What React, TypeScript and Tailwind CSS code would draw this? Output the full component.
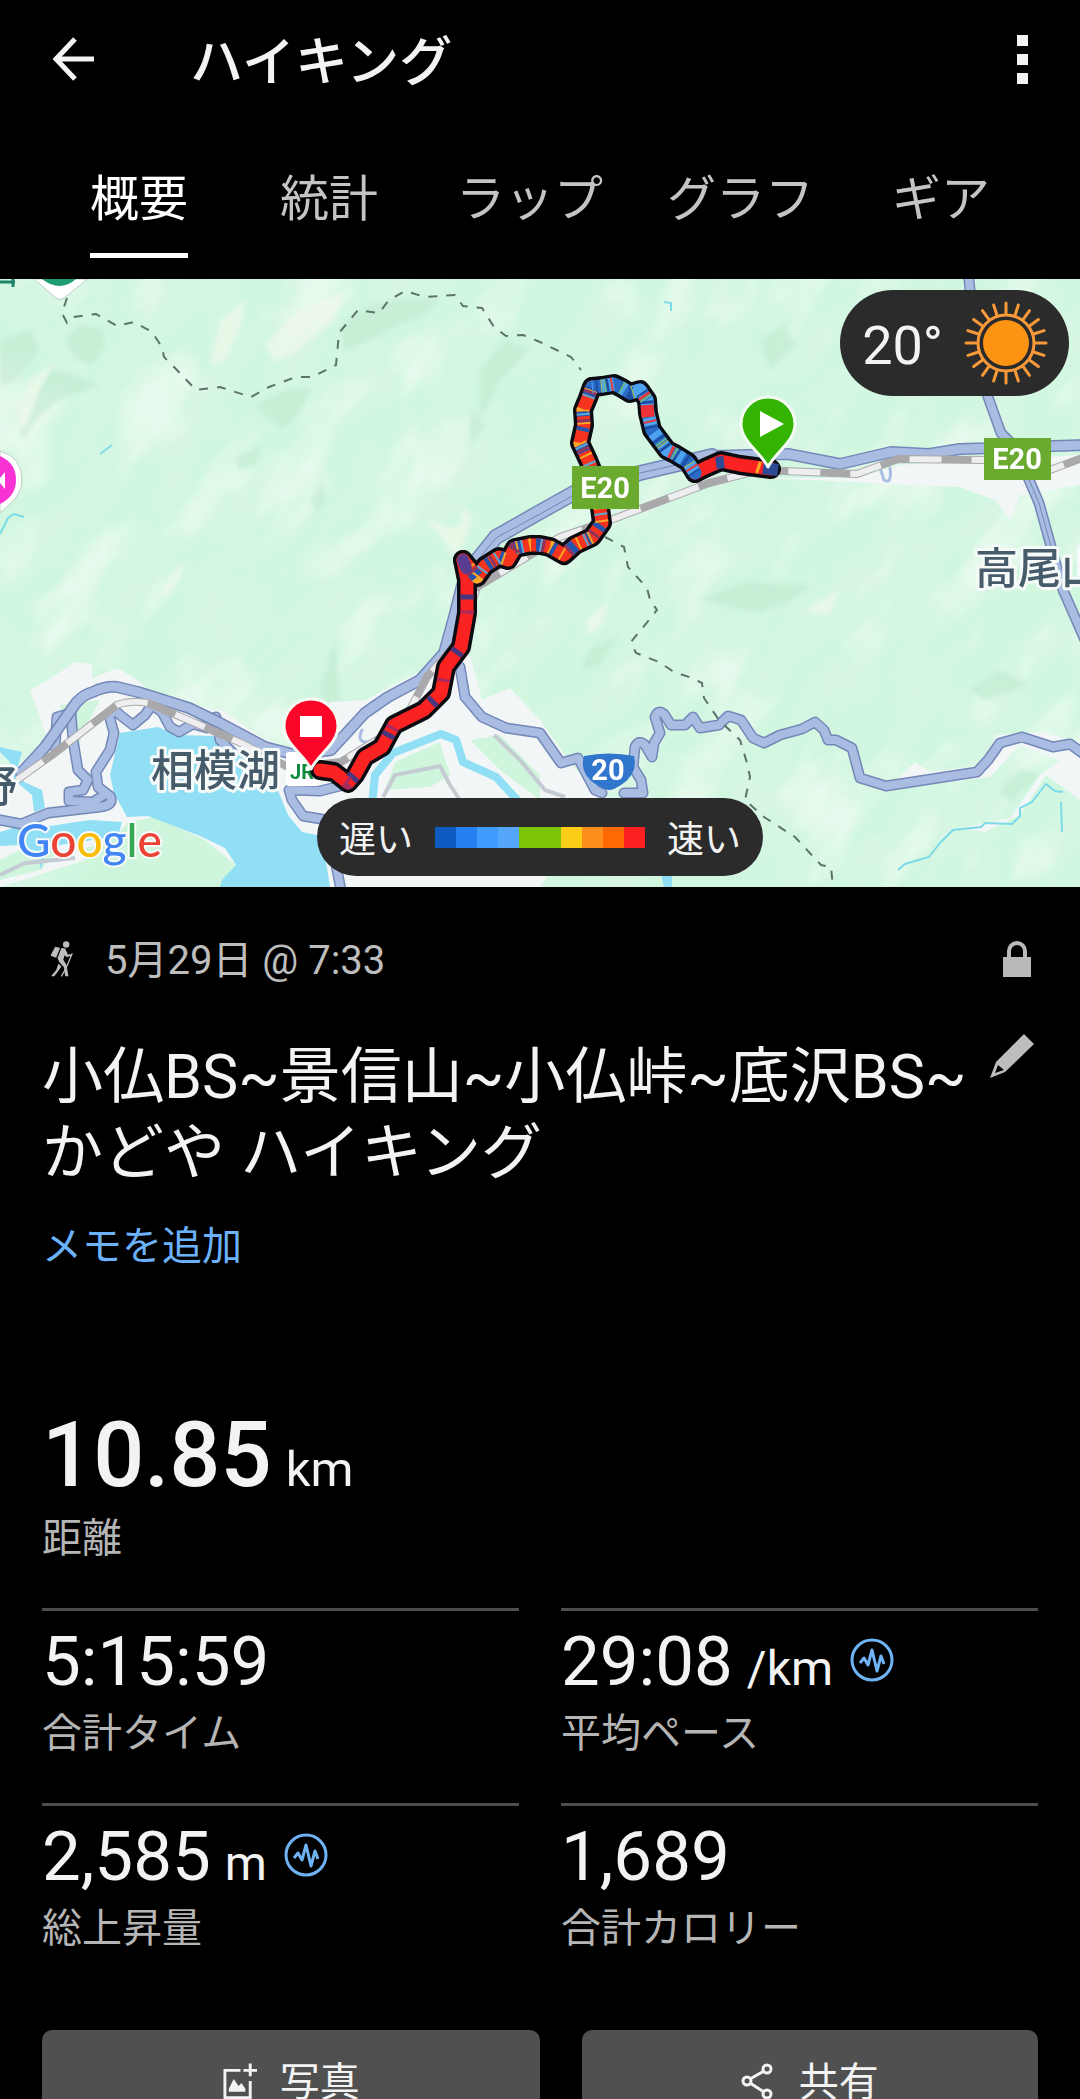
import type { ReactNode } from "react";

const FONT = "font-['Roboto','Noto_Sans_CJK_JP',sans-serif]";

const EXPRESSWAY =
  "M21 773L45 747L76 703Q84 694 93 692Q105 686 117 687L138 692L189 708L220 723L265 747L296 755L331 750L365 713L388 697L420 680L444 653L455 613L462 585L472 563L496 537L540 512L574 493L640 473L712 456L788 454L840 464L891 452L929 454L960 449L1085 445";
const ROADS = [
  "M-5 819L21 824L48 813L100 807Q115 805 110 796L98 787L96 772L110 750L114 733L109 715Q115 709 120 715L133 725L145 715L152 705L162 712L170 727L179 732L193 724L207 728L216 717L220 740L232 752",
  "M55 747L57 717L71 713L73 740L78 770L88 780L83 790L69 792L69 801L93 802L104 795",
  "M344 785L320 791L289 790L292 800L303 816L327 820L341 890",
  "M460 667L465 697L482 717L506 728L540 733L561 763L578 758L586 773L595 790L602 793",
  "M624 793L643 793L641 780L633 767L635 747Q639 739 645 745L652 757L654 743L660 733L655 717Q658 709 664 714L671 725L685 725L693 717L700 728L719 725L728 716L741 720L753 738L764 743L780 735L802 729L815 722L824 730L828 740L836 740L852 748L860 778L886 786L977 772L988 760L1000 743L1022 737L1053 747L1070 744L1085 755",
  "M968 270L970 290L988 397L1001 433L1015 447L1039 503L1052 550L1063 590L1085 640",
];
const RAIL =
  "M17 780L52 755L117 705Q130 700 148 703L200 725L241 743L290 768L341 762L385 735L406 717L427 677L460 640L477 587L560 537L616 518L709 483L760 470L857 474L898 459L984 460L1050 470L1085 457";
const BOUNDARY = [
  "M67 298L62 313L67 323L74 317L96 314L117 326L134 322L152 332L162 347L164 357L174 367L196 390L220 387L251 397L269 387L296 377L312 377L336 365L339 333L358 310L379 313L389 300L405 291L425 297L455 295L463 306L482 308L494 327L506 336L523 335L540 342L571 357L581 370",
  "M605 537L624 547L628 567L647 588L650 600L657 610L631 642L636 653L659 662L674 672L692 678L702 683L704 698L719 720L740 740L747 763L750 777L745 800L764 817L795 837L821 865L831 867L833 887",
];
const TRACK_LOW =
  "M320 770L334 772L348 783L355 775L365 757L382 747L394 725L424 710L441 693L446 667L461 647L467 613L467 580L463 560";
const TRACK_MID =
  "M463 560L477 577L485 566L499 557L508 560L515 548L530 545L540 545L550 547L564 555L575 545L592 537L602 523L600 508L595 477L588 460L580 443L584 425L583 410L588 398L592 387";
const TRACK_UP =
  "M592 387L602 386L614 384L622 388L630 393L640 390L647 400L648 413L652 430L667 450L675 454L688 462L695 473";
const TRACK_END = "M695 473L705 468L721 461L740 465L771 469";

const TERRAIN_DARK = [
  "M65 340L80 325L102 328L105 345L92 365L75 358Z",
  "M340 325L370 305L405 298L440 300L420 318L395 326L370 340L345 350Z",
  "M20 430L50 370L75 375L100 385L62 398L40 415L22 440Z",
  "M255 405L285 390L312 388L300 410L283 430L270 420Z",
  "M480 370L505 340L530 350L500 380L480 420Z",
  "M700 600L745 582L810 585L785 605L755 612Z",
  "M0 340L30 330L40 350L15 380L0 385Z",
  "M760 340L785 325L795 345L770 370Z",
  "M470 410L485 425L470 445Z",
  "M310 500L322 480L326 500L318 512Z",
  "M590 650L618 635L600 665L580 670Z",
  "M970 690L1000 670L1030 685L985 700Z",
  "M1000 790L1020 770L1040 775L1010 802Z",
  "M235 458L262 445L255 465L240 470Z",
  "M320 690L335 640L340 700L330 710Z",
];
const TERRAIN_LIGHT = [
  "M210 365L220 320L245 300L240 330L225 360Z",
  "M265 345L300 310L345 292L335 320L300 350L275 362Z",
  "M15 410L30 380L55 362L40 390L25 430Z",
  "M425 518L450 528L460 525L463 505L472 518L465 540L455 558L440 535Z",
  "M160 590L185 560L180 580L165 600Z",
  "M900 340L930 330L915 370L880 385Z",
  "M585 620L610 600L600 625L588 636Z",
  "M820 600L840 590L830 615L805 612Z",
];

function Tints({ d, shades }: { d: string; shades: [string, string, number][] }) {
  return (
    <>
      {shades.map(([color, dash, offset]) => (
        <path key={color + dash} d={d} stroke={color} strokeWidth={13} strokeDasharray={dash} strokeDashoffset={offset} />
      ))}
    </>
  );
}

function RouteMap() {
  return (
    <svg viewBox="0 279 1080 608" className="block h-auto w-full" role="img" aria-label="ルートマップ">
      <defs>
        <filter id="relief" x="0" y="0" width="100%" height="100%">
          <feTurbulence type="fractalNoise" baseFrequency="0.011 0.021" numOctaves={3} seed={11} />
          <feColorMatrix values="0 0 0 0 0.73  0 0 0 0 0.91  0 0 0 0 0.8  3.4 0 0 0 -1.6" />
        </filter>
        <filter id="glow" x="0" y="0" width="100%" height="100%">
          <feTurbulence type="fractalNoise" baseFrequency="0.01 0.02" numOctaves={3} seed={4} />
          <feColorMatrix values="0 0 0 0 0.95  0 0 0 0 0.98  0 0 0 0 0.93  4 0 0 0 -2.1" />
        </filter>
        <filter id="soft">
          <feGaussianBlur stdDeviation={2} />
        </filter>
      </defs>
      <rect y={279} width={1080} height={608} fill="#d2f7e1" />
      <g transform="rotate(-52 540 583)">
        <rect x={-260} y={-260} width={1600} height={1700} filter="url(#relief)" opacity={0.4} />
        <rect x={-260} y={-260} width={1600} height={1700} filter="url(#glow)" opacity={0.5} />
      </g>
      <g filter="url(#soft)">
        {TERRAIN_DARK.map((d) => (
          <path key={d} d={d} fill="#bfe9cf" opacity={0.6} />
        ))}
        {TERRAIN_LIGHT.map((d) => (
          <path key={d} d={d} fill="#f1f8ea" opacity={0.7} />
        ))}
      </g>

      {/* built-up areas */}
      <g fill="#f2f6f6">
        <path d="M30 690L48 680L75 662L92 664L92 678L118 668L140 682L150 692L190 703L225 712L262 738L300 752L330 702L365 700L420 672L470 655L482 700L510 688L540 720L570 762L602 800L540 887L230 887L150 840L0 887L0 780L48 740Z" />
        <path d="M900 776L915 762L930 772L985 765L996 735L1040 732L1080 742V800L1046 775L1020 815L985 832L960 828L1010 818L1040 775L1060 760L1020 745L990 777L890 790Z" />
        <path d="M700 478L857 478L900 465L1080 455V485L1020 495L1010 520L995 500L960 487L905 485L857 482L760 478Z" />
      </g>
      <g fill="#cff6dc">
        <path d="M60 705L100 700L82 735L78 752L70 745Z" />
        <path d="M385 790L395 762L440 742L450 775L430 787Z" />
        <path d="M470 740L500 735L540 775L540 800L500 770Z" />
        <path d="M128 822L155 817L205 840L236 865L222 887H60L90 870L80 850L115 838Z" />
        <path d="M0 860L30 845L60 850L40 870L0 880Z" />
      </g>

      {/* water */}
      <g fill="#90dff5">
        <path d="M120 733L158 727L176 735L213 736L222 750L262 762L279 793L288 815L302 832L322 836L330 887H220L222 880L236 865L225 848L200 836L148 816L127 817L114 793L110 775Z" />
        <path d="M0 747L22 752L18 765L24 782L42 790L45 808L34 812L32 795L14 780L10 762L0 752Z" />
        <path d="M0 832L20 826L50 826L90 820L122 822L118 836L60 845L45 855L41 870L38 852L20 845L0 846Z" />
        <path d="M660 870L672 872V887H664Z" />
      </g>
      <path d="M372 805L375 775L393 753L441 734L456 740L463 762L496 777L520 803" fill="none" stroke="#90dff5" strokeWidth={8} strokeLinejoin="round" />
      <g fill="none" stroke="#7bdbe8" strokeWidth={2}>
        <path d="M898 870L905 864L929 857L940 843L953 830L981 827L985 823L1012 824L1020 816L1020 808L1032 802L1046 784L1055 791L1063 792" />
        <path d="M1061 802L1062 832M100 454L112 445M0 534L8 518L14 514L24 517M664 302L671 303L671 311" />
      </g>
      <path d="M383 797L395 775L440 766L450 785L460 800M0 875L25 863L75 858M494 735L520 760L545 790L565 797" fill="none" stroke="#c5cbd2" strokeWidth={4} />

      {/* roads */}
      <g fill="none" strokeLinejoin="round" strokeLinecap="round">
        {ROADS.map((d) => (
          <path key={d} d={d} stroke="#7488b8" strokeWidth={11} />
        ))}
        {ROADS.map((d) => (
          <path key={d} d={d} stroke="#a9bce2" strokeWidth={8} />
        ))}
        <path d={EXPRESSWAY} stroke="#7488b8" strokeWidth={12} />
        <path d={EXPRESSWAY} stroke="#a9bce2" strokeWidth={9} />
        <path d="M476 562L496 537L540 512L574 493L640 473L712 456" stroke="#7488b8" strokeWidth={16} />
        <path d="M476 562L496 537L540 512L574 493L640 473L712 456" stroke="#a9bce2" strokeWidth={13} />
        <path d="M476 562L496 538L540 514L574 495L640 473L690 462M1015 447L1039 503L1052 550" stroke="#7488b8" strokeWidth={1} />
        <path d="M880 468L884 480Q892 485 890 468M362 730Q355 744 372 742" stroke="#a9bce2" strokeWidth={3} />
      </g>
      <g fill="none" strokeLinejoin="round">
        <path d={RAIL} stroke="#a9a8ab" strokeWidth={8} />
        <path d={RAIL} stroke="#eeeef0" strokeWidth={6} strokeDasharray="32 30" />
      </g>
      <g fill="none" stroke="#5d7269" strokeWidth={2} strokeDasharray="9 9">
        {BOUNDARY.map((d) => (
          <path key={d} d={d} />
        ))}
      </g>

      {/* place pins at the edges */}
      <path d="M34 279L56 298Q60 301 64 298L88 279Z" fill="#fff" stroke="#b9cdc4" />
      <path d="M42 279Q60 293 76 279Z" fill="#1d9c71" />
      <path d="M0 282H15M13 279V287" stroke="#1d8468" strokeWidth={3} />
      <path d="M0 451Q22 457 22 480Q22 492 12 502L0 513Z" fill="#fff" stroke="#b9cdc4" />
      <path d="M0 456Q16 463 16 480Q16 496 0 504Z" fill="#f832d3" />
      <path d="M0 478L5 472V489L0 483Z" fill="#fff" />

      {/* place names */}
      <g className="font-['Noto_Sans_CJK_JP',sans-serif]" fontSize={43} fontWeight={500} fill="#475c6b" stroke="#f6faf9" strokeWidth={6} strokeLinejoin="round" paintOrder="stroke">
        <text x={151} y={786}>相模湖</text>
        <text x={975} y={584}>高尾山</text>
        <text x={-26} y={802}>野</text>
      </g>
      <rect x={286} y={752} width={34} height={34} rx={3} fill="#fff" />
      <text x={290} y={779} fontSize={20} fontWeight={700} fill="#0e8a3c" className="font-['Roboto',sans-serif]">JR</text>

      {/* recorded track */}
      <g fill="none" strokeLinejoin="round" strokeLinecap="round">
        {[TRACK_LOW, TRACK_MID, TRACK_UP, TRACK_END].map((d) => (
          <path key={d} d={d} stroke="#0b0b12" strokeWidth={20} />
        ))}
        <path d={TRACK_LOW} stroke="#fb2222" strokeWidth={13} />
        <path d={TRACK_END} stroke="#fb2222" strokeWidth={13} />
        <path d={TRACK_MID} stroke="#f5331f" strokeWidth={13} />
        <path d={TRACK_UP} stroke="#2a6bc8" strokeWidth={13} />
      </g>
      <g fill="none" strokeLinejoin="round">
        <Tints d={TRACK_LOW} shades={[["#47367f", "5 52", 20], ["#a82a5e", "3 71", 45]]} />
        <Tints
          d={TRACK_MID}
          shades={[
            ["#2554ad", "5 17 8 14 4 11", 6],
            ["#f9a825", "2 19 2 11", 12],
            ["#5aa9d8", "2 31 2 17", 3],
            ["#8a3560", "3 27", 17],
          ]}
        />
        <Tints
          d={TRACK_UP}
          shades={[
            ["#4da3f0", "6 9 12 7", 5],
            ["#1d4fa3", "3 12 2 8", 11],
            ["#e23a3f", "3 24 2 36", 8],
            ["#66b88f", "2 28 2 16", 18],
            ["#b7c94a", "1 33", 25],
          ]}
        />
        <path d="M647 405L648 417" stroke="#ee3138" strokeWidth={13} />
        <path d="M716 463L724 462M763 468L778 470" stroke="#2e4a94" strokeWidth={12} />
        <path d="M757 467L760 468" stroke="#f9a825" strokeWidth={12} />
        <path d="M463 560L466 568" stroke="#5a3d8f" strokeWidth={12} strokeLinecap="round" />
      </g>

      {/* road signs */}
      <g className="font-['Roboto',sans-serif]" fontWeight={700} fill="#fff" textAnchor="middle">
        <rect x={572} y={466} width={67} height={43} fill="#69aa2f" />
        <text x={605} y={498} fontSize={29}>E20</text>
        <rect x={984} y={438} width={67} height={42} fill="#69aa2f" />
        <text x={1017} y={469} fontSize={29}>E20</text>
        <path d="M584 756Q609 751 634 756Q639 776 616 788Q609 792 602 788Q578 776 584 756Z" fill="#3176cd" />
        <text x={608} y={780} fontSize={29}>20</text>
      </g>

      {/* finish and start markers */}
      <g stroke="#f3fbf3" strokeWidth={3} strokeLinejoin="round">
        <path d="M311 769C304 754 284 744 284 726A27 27 0 0 1 338 726C338 744 318 754 311 769Z" fill="#fb0628" />
        <path d="M768 467C761 452 741 442 741 424A27 27 0 0 1 795 424C795 442 775 452 768 467Z" fill="#33b400" />
      </g>
      <rect x={300} y={716} width={22} height={21} fill="#fff" />
      <path d="M760 411L784 424L760 437Z" fill="#fff" />

      <text x={17} y={857} fontSize={46} fontWeight={500} stroke="#f6faf9" strokeWidth={4} paintOrder="stroke" className="font-['Lato','Roboto',sans-serif]">
        <tspan fill="#4285f4">G</tspan>
        <tspan fill="#ea4335">o</tspan>
        <tspan fill="#fbbc05">o</tspan>
        <tspan fill="#4285f4">g</tspan>
        <tspan fill="#34a853">l</tspan>
        <tspan fill="#ea4335">e</tspan>
      </text>
    </svg>
  );
}

function Sun() {
  return (
    <svg viewBox="-42 -42 84 84" className="size-[84px]" aria-hidden="true">
      <g stroke="#f99a3a" strokeWidth={3} strokeLinecap="round">
        {Array.from({ length: 20 }, (_, i) => (
          <path key={i} d="M0 -29V-40" transform={`rotate(${i * 18})`} />
        ))}
      </g>
      <circle r={28} fill="none" stroke="#f99a3a" strokeWidth={3} />
      <circle r={23} fill="#fd9312" />
    </svg>
  );
}

function Hiker() {
  return (
    <svg viewBox="0 0 72 112" className="h-9 w-6" fill="#bdbdbd" aria-hidden="true">
      <circle cx={49} cy={11} r={10} />
      <path d="M15 18L30 22L18 52L2 47Q0 44 3 40Z" />
      <path d="M34 22L46 23L54 42L66 41L66 47L50 50L44 44L40 58L50 74L56 110L46 110L42 82L28 66L22 54Z" />
      <path d="M25 70L34 79L24 94L12 110L2 110L18 90Z" />
      <path d="M68 38L48 86L34 110" fill="none" stroke="#bdbdbd" strokeWidth={4} />
    </svg>
  );
}

function Pulse() {
  return (
    <svg viewBox="0 0 44 44" className="ml-[17px] mt-4 size-11 self-start" fill="none" stroke="#6fb3f5" strokeWidth={3} aria-hidden="true">
      <circle cx={22} cy={22} r={20} />
      <path d="M10 25L14 20L18 27L22 12L27 33L31 18L34 26" strokeLinejoin="round" />
    </svg>
  );
}

function Stat({ value, unit, label, estimated }: { value: string; unit?: string; label: string; estimated?: boolean }) {
  return (
    <div className="flex flex-col border-t-3 border-[#4d4d4d] pt-[11px] pb-[45px]">
      <dt className="order-2 mt-2 text-[40px] leading-[48px] text-[#b5b5b5]">{label}</dt>
      <dd className="flex h-20 items-baseline text-[69px] leading-[80px]">
        {value}
        {unit && <span className="ml-[14px] text-[48px] leading-none">{unit}</span>}
        {estimated && <Pulse />}
      </dd>
    </div>
  );
}

function ActionButton({ icon, children, className }: { icon: ReactNode; children: ReactNode; className: string }) {
  return (
    <button type="button" className={`flex h-[106px] items-center justify-center rounded-[10px] bg-[#505050] text-[40px] leading-[48px] ${className}`}>
      {icon}
      {children}
    </button>
  );
}

const TABS = ["概要", "統計", "ラップ", "グラフ", "ギア"];
const LEGEND = ["bg-[#0c5bc2]", "bg-[#2580f2]", "bg-[#419bfd]", "bg-[#55a6fd]", "bg-[#7cc506]", "bg-[#7cc506]", "bg-[#fdcd18]", "bg-[#fe8f1c]", "bg-[#fd6a03]", "bg-[#fd2020]"];

export default function App() {
  return (
    <div lang="ja" className={`flex h-screen flex-col overflow-hidden bg-black text-[#f3f3f3] ${FONT}`}>
      <header className="flex h-[118px] shrink-0 items-center pr-[50px] pl-[50px]">
        <button type="button" aria-label="戻る" className="flex size-12 items-center justify-center">
          <svg viewBox="0 0 48 48" className="size-12" fill="none" stroke="#f3f3f3" strokeWidth={5}>
            <path d="M44 24H7M25 4L6 24L25 44" />
          </svg>
        </button>
        <h1 className="ml-[92px] flex-1 pt-2 text-[53px] leading-[64px] font-medium">ハイキング</h1>
        <button type="button" aria-label="その他" className="flex w-4 flex-col items-center gap-2">
          <span className="size-[11px] bg-[#f3f3f3]" />
          <span className="size-[11px] bg-[#f3f3f3]" />
          <span className="size-[11px] bg-[#f3f3f3]" />
        </button>
      </header>

      <nav role="tablist" className="flex shrink-0 justify-center py-[21px]">
        {TABS.map((tab, i) => (
          <button
            key={tab}
            type="button"
            role="tab"
            aria-selected={i === 0}
            className={`flex h-[119px] min-w-[190px] justify-center px-8 text-[49px] ${i === 0 ? "text-white" : "text-[#c4c4c4]"}`}
          >
            <span className={`flex h-full items-center border-t-8 border-b-5 border-transparent ${i === 0 ? "border-b-white" : ""}`}>{tab}</span>
          </button>
        ))}
      </nav>

      <main className="min-h-0 flex-1 overflow-hidden">
        <section className="relative">
          <RouteMap />
          <div className="absolute top-[11px] right-[11px] flex h-[106px] items-center gap-[21px] rounded-full bg-[#2b2b2b] pr-[21px] pl-[22px]">
            <span className="pt-1 text-[54px]">20°</span>
            <Sun />
          </div>
          <div className="absolute bottom-[11px] left-1/2 flex h-[78px] -translate-x-1/2 items-center gap-[22px] rounded-full bg-[#2b2b2b] px-[22px] text-[37px]">
            <span className="pt-2">遅い</span>
            <span className="flex">
              {LEGEND.map((c, i) => (
                <span key={i} className={`h-[21px] w-[21px] ${c}`} />
              ))}
            </span>
            <span className="pt-2">速い</span>
          </div>
        </section>

        <section className="px-[42px] pt-12">
          <div className="flex h-12 items-center text-[40px] text-[#bdbdbd]">
            <span className="ml-2">
              <Hiker />
            </span>
            <time className="ml-[31px] flex-1 pt-1">5月29日 @ 7:33</time>
            <svg viewBox="0 0 28 36" className="mr-[7px] h-9 w-7" aria-label="非公開">
              <rect y={16} width={28} height={20} fill="#b9b9b9" />
              <path d="M6 17V10A8 8 0 0 1 22 10V17" fill="none" stroke="#b9b9b9" strokeWidth={4} />
            </svg>
          </div>

          <div className="mt-[51px] flex items-start">
            <h2 className="flex-1 pt-[5px] text-[61px] leading-[76px]">小仏BS~景信山~小仏峠~底沢BS~かどや ハイキング</h2>
            <button type="button" aria-label="名前を編集" className="mr-1">
              <svg viewBox="0 0 44 44" className="size-11">
                <path fillRule="evenodd" d="M34 0L44 10L15 38L0 44L6 28ZM8 31L5 39L14 36Z" fill="#bdbdbd" />
              </svg>
            </button>
          </div>

          <a href="#memo" className="mt-8 block text-[40px] leading-[48px] text-[#6cb2fb]">
            メモを追加
          </a>

          <dl className="mt-[137px] flex flex-col pb-[45px]">
            <dt className="order-2 mt-[11px] text-[40px] leading-[48px] text-[#b5b5b5]">距離</dt>
            <dd className="flex h-24 items-baseline text-[90px] leading-[96px] font-medium">
              10.85<span className="ml-[14px] text-[49px] leading-none font-normal">km</span>
            </dd>
          </dl>

          <dl className="grid grid-cols-2 gap-x-[42px]">
            <Stat value="5:15:59" label="合計タイム" />
            <Stat value="29:08" unit="/km" label="平均ペース" estimated />
            <Stat value="2,585" unit="m" label="総上昇量" estimated />
            <Stat value="1,689" label="合計カロリー" />
          </dl>

          <div className="mt-8 flex gap-[42px]">
            <ActionButton
              className="grow-12 basis-0"
              icon={
                <svg viewBox="0 0 37 40" className="mr-[22px] h-10 w-9" fill="none" stroke="#f3f3f3" strokeWidth={3} aria-hidden="true">
                  <path d="M19 7H3V35H29V18M29 0V13M22 7H36" />
                  <path d="M7 29V26L12 16L17 23L20 20L24 26V29Z" fill="#f3f3f3" stroke="none" />
                </svg>
              }
            >
              写真
            </ActionButton>
            <ActionButton
              className="grow-11 basis-0"
              icon={
                <svg viewBox="0 0 32 40" className="mr-[26px] h-10 w-8" fill="none" stroke="#f3f3f3" strokeWidth={3} aria-hidden="true">
                  <circle cx={26} cy={6} r={4} />
                  <circle cx={6} cy={18} r={4} />
                  <circle cx={26} cy={31} r={4} />
                  <path d="M9 16L23 8M9 20L23 29" />
                </svg>
              }
            >
              共有
            </ActionButton>
          </div>
        </section>
      </main>
    </div>
  );
}
